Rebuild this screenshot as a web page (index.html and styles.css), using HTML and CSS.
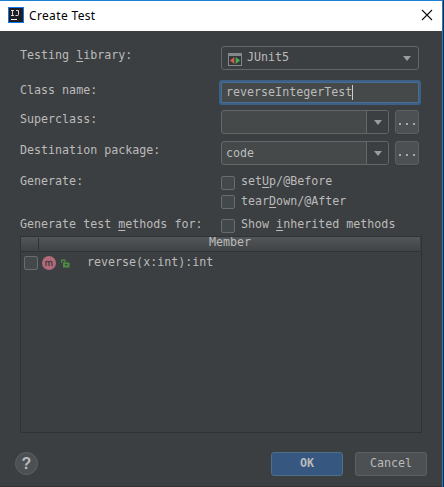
FILE: index.html
```
<!DOCTYPE html>
<html lang="en">
<head>
<meta charset="utf-8">
<title>Create Test</title>
<link rel="stylesheet" href="styles.css">
</head>
<body>
<div class="window">
  <header class="titlebar">
    <svg class="logo" width="16" height="16" viewBox="0 0 16 16"><rect width="16" height="16" fill="#1676e8"/><rect x="1" y="1" width="14" height="14" fill="#1d1f23"/><path d="M3 3.500h3M4.500 3.500v5M3 8.500h3M8 3.500h2.500v4.200q0 .8-.8.800H7.500" fill="none" stroke="#ddd"/><path d="M3 12.500h6" stroke="#fff"/></svg>
    <h1>Create Test</h1>
    <svg class="close" width="12" height="12" viewBox="0 0 12 12"><path d="M1 1l10 10M11 1L1 11" stroke="#111" stroke-width="1.100"/></svg>
  </header>
  <main class="content">
    <div class="row library">
      <label>Testing <u>l</u>ibrary:</label>
      <div class="select">
        <svg width="14" height="13" viewBox="0 0 14 13"><path d="M0 0h14v13H0z" fill="#85898b"/><path d="M1 3h12v9H1z" fill="#34383a"/><path d="M6.300 4v7L2 7.500z" fill="#d65c4e"/><path d="M7.700 4v7L12 7.500z" fill="#45b050"/></svg>
        <span>JUnit5</span>
        <i class="arrow"></i>
      </div>
    </div>
    <div class="row name">
      <label>Class name:</label>
      <div class="input"><span>reverseIntegerTest</span><i class="caret"></i></div>
    </div>
    <div class="row super">
      <label>Superclass:</label>
      <div class="combo"><span></span><b><i class="arrow"></i></b></div>
      <div class="browse"><i></i><i></i><i></i></div>
    </div>
    <div class="row dest">
      <label>Destination package:</label>
      <div class="combo"><span>code</span><b><i class="arrow"></i></b></div>
      <div class="browse"><i></i><i></i><i></i></div>
    </div>
    <div class="row check first"><label>Generate:</label><i class="box"></i><span>set<u>U</u>p/@Before</span></div>
    <div class="row check second"><label></label><i class="box"></i><span>tear<u>D</u>own/@After</span></div>
    <div class="row check third"><label>Generate test <u>m</u>ethods for:</label><i class="box"></i><span>Show <u>i</u>nherited methods</span></div>
    <section class="table">
      <div class="thead"><div class="col"></div><div class="member">Member</div></div>
      <div class="item">
        <i class="box"></i>
        <svg class="method" width="14" height="14" viewBox="0 0 14 14"><circle cx="7" cy="7" r="7" fill="#b06a7a"/><path d="M4 10V5M4 6.600Q4 5.300 5.400 5.300T7 6.600V10M7 6.600Q7 5.300 8.500 5.300T10 6.600V10" fill="none" stroke="#443b40" stroke-width="1.200"/></svg>
        <svg class="lock" width="9" height="9" viewBox="0 0 9 9"><path d="M.7 4V1.200h3.300v3" fill="none" stroke="#4d8c42" stroke-width="1.200"/><path d="M2 3.500h6.500V8.500H2z" fill="#4d8c42"/><path d="M4.300 5h2v1.500h-2z" fill="#34433a"/></svg>
        <span>reverse(x:int):int</span>
      </div>
    </section>
    <footer>
      <div class="help">?</div>
      <div class="button primary">OK</div>
      <div class="button">Cancel</div>
    </footer>
  </main>
</div>
</body>
</html>
```
FILE: styles.css
```
* { box-sizing: border-box; }
body { margin: 0; background: #27292b; }
.window {
  width: 443px; height: 487px;
  border-top: 1px solid #1c7fd6; border-right: 1px solid #0f7fe0;
  background: #3c3f41; color: #bbb;
  font: 11.66px/14px "DejaVu Sans Mono", monospace;
}
.titlebar { height: 30px; background: #fff; display: flex; align-items: center; padding: 0 9px 0 8px; }
.logo { margin-top: -2px; }
h1 { margin: 0 auto 0 5px; font: 12px/16px "Noto Sans", sans-serif; letter-spacing: .35px; color: #000; }
.close { margin-top: -2px; }
.content { height: 456px; padding: 15px 0 0 20px; border-bottom: 1px solid #353234; }
.row { display: flex; }
.row label { width: 201px; flex: none; white-space: pre; }
u { text-decoration: underline; text-decoration-thickness: 1px; text-underline-offset: 2px; }
.arrow { border: 4px solid transparent; border-top: 5px solid #9a9da0; border-bottom: 0; }
.library { height: 34px; }
.library label { padding-top: 2px; }
.select { width: 198px; height: 24px; border: 1px solid #646668; border-radius: 3px; display: flex; align-items: center; padding: 0 7px 0 6px; }
.select svg { margin-top: 2px; }
.select span { margin: -2px auto 0 5px; }
.name { height: 30px; }
.name label { padding-top: 3px; width: 199px; }
.input { width: 202px; height: 25px; background: #45494a; border: 2px solid #3d6185; border-radius: 3px; box-shadow: inset 0 0 0 1px #466d94; display: flex; align-items: center; padding-left: 5px; }
.input span { margin-top: -1px; }
.caret { width: 1px; height: 15px; background: #ccc; }
.super { height: 31px; }
.dest { height: 35px; }
.super label { padding-top: 2px; }
.dest label { padding-top: 2px; }
.combo { width: 168px; height: 24px; border: 1px solid #646668; border-radius: 3px; background: #45494a; display: flex; overflow: hidden; }
.combo span { flex: 1; padding: 4px 0 0 4px; }
.combo b { width: 22px; border-left: 1px solid #646668; background: #3c3f41; display: flex; align-items: center; justify-content: center; }
.browse { margin-left: 6px; width: 24px; height: 24px; border: 1px solid #5e6162; border-radius: 3px; background: #4c5052; box-shadow: 0 1px #36393b; display: flex; justify-content: center; align-items: center; gap: 5px; padding-top: 3px; }
.browse i { width: 2px; height: 2px; background: #aaa; }
.box { width: 14px; height: 14px; border: 1px solid #6b6b6b; border-radius: 2px; background: #43494a; flex: none; }
.check span { margin-left: 6px; }
.first { height: 19px; }
.first label, .first span { margin-top: -2px; }
.second { height: 24px; }
.second span { margin-top: -1px; }
.third { height: 17px; }
.third label, .third span { margin-top: -2px; }
.table { width: 402px; height: 197px; border: 1px solid #303234; }
.thead { height: 15px; display: flex; background: linear-gradient(#535658, #404345); border-bottom: 1px solid #313335; line-height: 11px; margin-right: 1px; }
.col { width: 18px; border-right: 1px solid #2f3234; margin: 1px 0; }
.member { flex: 1; text-align: center; padding-left: 1px; }
.item { display: flex; align-items: center; padding: 4px 0 0 3px; }
.item .method { margin-left: 4px; }
.item .lock { margin-left: 5px; }
.item span { margin: -2px 0 0 17px; }
footer { display: flex; padding: 19px 15px 0 0; margin-left: -5px; }
.help { width: 23px; height: 23px; margin: 0 auto 0 0; border-radius: 50%; background: #4c5052; border: 1px solid #5e6162; text-align: center; font: bold 16px/22px "Liberation Sans", sans-serif; }
.button { width: 72px; height: 24px; border: 1px solid #5e6060; border-radius: 3px; background: #4c5052; text-align: center; line-height: 20px; margin-left: 12px; }
.primary { background: #365880; border-color: #4c708c; font-weight: bold; }
```
